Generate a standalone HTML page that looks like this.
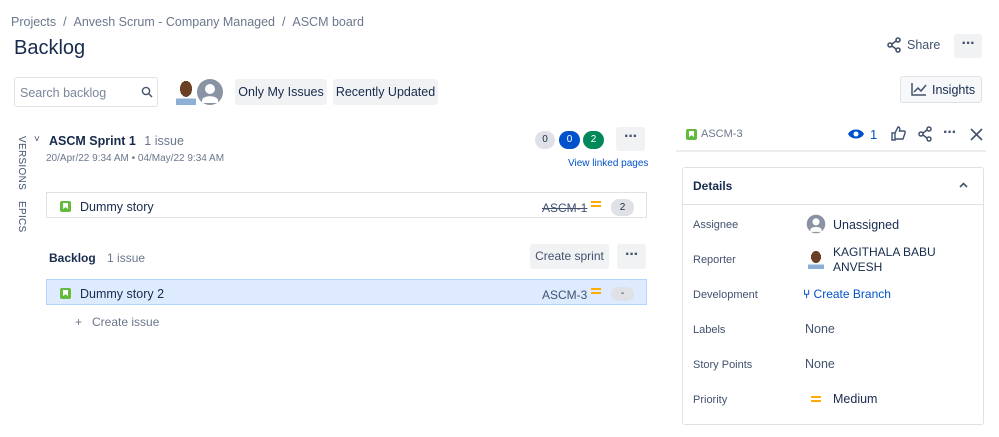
<!DOCTYPE html><html><head><style>
body{margin:0;width:999px;height:437px;background:#fff;font-family:"Liberation Sans",sans-serif;color:#172b4d;position:relative;overflow:hidden}
.a{position:absolute}
.btn{position:absolute;background:#f1f2f4;border-radius:3px;font-size:12.5px;color:#42526e;text-align:center}
.g{color:#6b778c}
.dots{font-size:16px;font-weight:bold;letter-spacing:-1px}
.lbl{position:absolute;left:693px;font-size:11px;color:#42526e}
.val{position:absolute;left:805px;font-size:12.5px;color:#42526e}
.story{position:absolute;width:11px;height:11px;background:#63ba3c;border-radius:2px}
.story:after{content:"";position:absolute;left:3px;top:2px;width:5px;height:6px;background:#fff;clip-path:polygon(0 0,100% 0,100% 100%,50% 70%,0 100%)}
.eq{position:absolute;width:10px;height:6px;border-top:2px solid #ffab00;border-bottom:2px solid #ffab00;box-sizing:border-box}
</style></head><body>
<div class="a g" style="left:11px;top:15px;font-size:12.5px">Projects &nbsp;/ &nbsp;Anvesh Scrum - Company Managed &nbsp;/ &nbsp;ASCM board</div>
<div class="a" style="left:14px;top:37px;font-size:20px">Backlog</div>
<svg class="a" style="left:886px;top:37px" width="16" height="16" viewBox="0 0 16 16" fill="none" stroke="#42526e" stroke-width="1.6"><circle cx="12" cy="3" r="2"/><circle cx="4" cy="8" r="2"/><circle cx="12" cy="13" r="2"/><path d="M6 7l4-3M6 9l4 3"/></svg>
<div class="a" style="left:907px;top:38px;font-size:12.5px;color:#42526e">Share</div>
<div class="btn dots" style="left:954px;top:34px;width:28px;height:24px;line-height:20px">···</div>
<div class="a" style="left:14px;top:77px;width:144px;height:30px;border:1px solid #dfe1e6;border-radius:3px;box-sizing:border-box"></div>
<div class="a g" style="left:20px;top:86px;font-size:12.5px;color:#7a869a">Search backlog</div>
<svg class="a" style="left:141px;top:86px" width="12" height="12" viewBox="0 0 12 12" fill="none" stroke="#42526e" stroke-width="1.4"><circle cx="5" cy="5" r="3.6"/><path d="M8 8l3 3"/></svg>
<div class="a" style="left:176px;top:79px;width:20px;height:26px;background:radial-gradient(ellipse 6px 8px at 50% 38%,#6b3f24 0 100%,transparent 100%),linear-gradient(transparent 75%,#8fb0d6 75%)"></div>
<svg class="a" style="left:196px;top:78px" width="28" height="28" viewBox="0 0 28 28"><circle cx="14" cy="14" r="13" fill="#8993a4"/><circle cx="14" cy="11" r="5" fill="#fff"/><path d="M6 22c1-5 15-5 16 0v3H6z" fill="#fff"/></svg>
<div class="btn" style="left:235px;top:79px;width:92px;height:26px;line-height:26px;color:#172b4d">Only My Issues</div>
<div class="btn" style="left:333px;top:79px;width:105px;height:26px;line-height:26px;color:#172b4d">Recently Updated</div>
<div class="a" style="left:900px;top:76px;width:82px;height:27px;border:1px solid #dfe1e6;border-radius:3px;box-sizing:border-box;background:#f7f8f9"></div>
<svg class="a" style="left:911px;top:82px" width="16" height="14" viewBox="0 0 16 14" fill="none" stroke="#42526e" stroke-width="1.5"><path d="M1 1v12h14M3 10l4-4 3 3 5-6"/></svg>
<div class="a" style="left:932px;top:83px;font-size:12.5px">Insights</div>
<div class="a" style="left:16px;top:136px;font-size:10px;color:#42526e;writing-mode:vertical-lr;letter-spacing:.3px">VERSIONS</div>
<div class="a" style="left:16px;top:201px;font-size:10px;color:#42526e;writing-mode:vertical-lr;letter-spacing:.3px">EPICS</div>
<div class="a" style="left:34px;top:134px;font-size:10px;color:#42526e">˅</div>
<div class="a" style="left:49px;top:134px;font-size:12.5px;font-weight:bold">ASCM Sprint 1 <span class="g" style="font-weight:normal;margin-left:5px">1 issue</span></div>
<div class="a g" style="left:46px;top:153px;font-size:10px">20/Apr/22 9:34 AM • 04/May/22 9:34 AM</div>
<div class="a" style="left:535px;top:131px;width:20px;height:18px;border-radius:9px;background:#dfe1e6;font-size:10px;text-align:center;line-height:18px">0</div>
<div class="a" style="left:559px;top:131px;width:21px;height:18px;border-radius:9px;background:#0052cc;color:#fff;font-size:10px;text-align:center;line-height:18px">0</div>
<div class="a" style="left:583px;top:131px;width:21px;height:18px;border-radius:9px;background:#00875a;color:#fff;font-size:10px;text-align:center;line-height:18px">2</div>
<div class="btn dots" style="left:616px;top:127px;width:29px;height:24px;line-height:20px">···</div>
<div class="a" style="left:568px;top:158px;font-size:10px;color:#0052cc">View linked pages</div>
<div class="a" style="left:46px;top:192px;width:601px;height:26px;border:1px solid #dfe1e6;box-sizing:border-box"></div>
<div class="story" style="left:60px;top:201px"></div>
<div class="a" style="left:80px;top:200px;font-size:12.5px">Dummy story</div>
<div class="a" style="left:542px;top:201px;font-size:12px;color:#42526e;text-decoration:line-through">ASCM-1</div>
<div class="eq" style="left:591px;top:201px"></div>
<div class="a" style="left:611px;top:199px;width:23px;height:17px;border-radius:8px;background:#dfe1e6;font-size:10px;text-align:center;line-height:17px">2</div>
<div class="a" style="left:49px;top:251px;font-size:12px;font-weight:bold">Backlog <span class="g" style="font-weight:normal;margin-left:8px">1 issue</span></div>
<div class="btn" style="left:530px;top:244px;width:79px;height:25px;line-height:25px;font-size:12px">Create sprint</div>
<div class="btn dots" style="left:617px;top:244px;width:29px;height:25px;line-height:21px">···</div>
<div class="a" style="left:46px;top:279px;width:601px;height:26px;border:1px solid #b3d4ff;background:#deebff;box-sizing:border-box"></div>
<div class="story" style="left:60px;top:288px"></div>
<div class="a" style="left:80px;top:287px;font-size:12.5px">Dummy story 2</div>
<div class="a" style="left:542px;top:288px;font-size:12px;color:#42526e">ASCM-3</div>
<div class="eq" style="left:591px;top:288px"></div>
<div class="a" style="left:611px;top:287px;width:23px;height:14px;border-radius:7px;background:#dfe1e6;font-size:10px;text-align:center;line-height:14px">-</div>
<div class="a g" style="left:75px;top:315px;font-size:12px">+ &nbsp;&nbsp;Create issue</div>
<div class="a" style="left:676px;top:150px;width:310px;height:2px;background:#ebecf0"></div>
<div class="story" style="left:686px;top:129px"></div>
<div class="a g" style="left:701px;top:128px;font-size:11px">ASCM-3</div>
<svg class="a" style="left:847px;top:128px" width="18" height="12" viewBox="0 0 18 12"><path d="M1 6C4 0 14 0 17 6C14 12 4 12 1 6z" fill="#0052cc"/><circle cx="9" cy="6" r="2.5" fill="#fff"/></svg>
<div class="a" style="left:870px;top:127px;font-size:13px;color:#0052cc">1</div>
<svg class="a" style="left:891px;top:126px" width="15" height="15" viewBox="0 0 15 15" fill="none" stroke="#42526e" stroke-width="1.4"><path d="M1 7h3v7H1zM4 7l3-6c2 0 2 2 1.5 4H13c1 0 1.5 1 1 2l-2 6H4"/></svg>
<svg class="a" style="left:917px;top:126px" width="16" height="16" viewBox="0 0 16 16" fill="none" stroke="#42526e" stroke-width="1.5"><circle cx="12" cy="3" r="2"/><circle cx="4" cy="8" r="2"/><circle cx="12" cy="13" r="2"/><path d="M6 7l4-3M6 9l4 3"/></svg>
<div class="a dots" style="left:943px;top:124px;color:#42526e">···</div>
<svg class="a" style="left:970px;top:128px" width="13" height="13" viewBox="0 0 13 13" stroke="#42526e" stroke-width="1.6"><path d="M1 1l11 11M12 1L1 12"/></svg>
<div class="a" style="left:682px;top:167px;width:302px;height:258px;border:1px solid #dfe1e6;border-radius:3px;box-sizing:border-box"></div>
<div class="a" style="left:682px;top:204px;width:302px;height:1px;background:#dfe1e6"></div>
<div class="a" style="left:693px;top:179px;font-size:12px;font-weight:bold">Details</div>
<svg class="a" style="left:959px;top:182px" width="9" height="6" viewBox="0 0 9 6" fill="none" stroke="#42526e" stroke-width="1.6"><path d="M1 5l3.5-3.5L8 5"/></svg>
<div class="lbl" style="top:219px">Assignee</div>
<svg class="a" style="left:806px;top:214px" width="20" height="20" viewBox="0 0 28 28"><circle cx="14" cy="14" r="13" fill="#8993a4"/><circle cx="14" cy="11" r="5" fill="#fff"/><path d="M6 22c1-5 15-5 16 0v3H6z" fill="#fff"/></svg>
<div class="val" style="left:833px;top:218px;color:#172b4d">Unassigned</div>
<div class="lbl" style="top:254px">Reporter</div>
<div class="a" style="left:808px;top:249px;width:16px;height:20px;background:radial-gradient(ellipse 5px 6px at 50% 40%,#6b3f24 0 100%,transparent 100%),linear-gradient(transparent 78%,#8fb0d6 78%)"></div>
<div class="a" style="left:833px;top:245px;width:120px;height:26px;overflow:hidden;font-size:12px;line-height:15px;color:#172b4d">KAGITHALA BABU ANVESH</div>
<div class="lbl" style="top:289px">Development</div>
<div class="a" style="left:803px;top:287px;font-size:12px;color:#0052cc;font-weight:bold">⑂ <span style="font-weight:normal">Create Branch</span></div>
<div class="lbl" style="top:324px">Labels</div><div class="val" style="top:322px">None</div>
<div class="lbl" style="top:359px">Story Points</div><div class="val" style="top:357px">None</div>
<div class="lbl" style="top:394px">Priority</div>
<div class="eq" style="left:811px;top:396px"></div>
<div class="val" style="left:833px;top:392px;color:#172b4d">Medium</div>
</body></html>
